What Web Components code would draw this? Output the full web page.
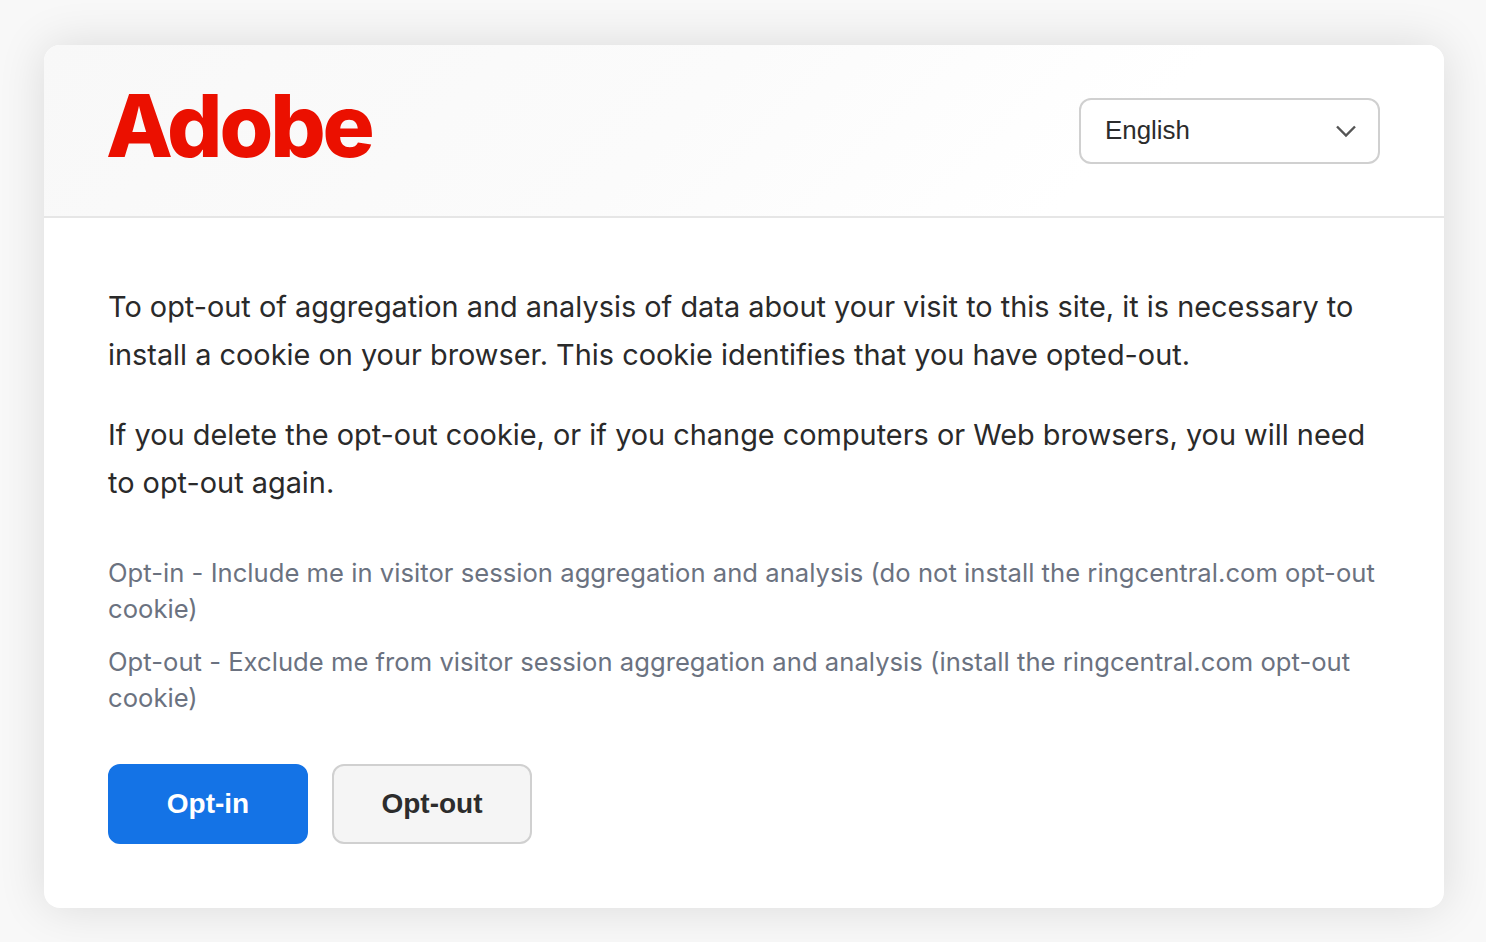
<!doctype html>
<html><head><meta charset="utf-8"><title>Opt-out</title>
<style>
html,body{margin:0;height:100%}
body{background:#f8f8f8;font-family:Inter,"Liberation Sans",sans-serif}
</style></head><body>
<optout-card>
  <adobe-logo slot="logo"></adobe-logo>
  <lang-select slot="lang">English</lang-select>
  <opt-para>To opt-out of aggregation and analysis of data about your visit to this site, it is necessary to install a cookie on your browser. This cookie identifies that you have opted-out.</opt-para>
  <opt-para>If you delete the opt-out cookie, or if you change computers or Web browsers, you will need to opt-out again.</opt-para>
  <opt-note slot="notes">Opt-in - Include me in visitor session aggregation and analysis (do not install the ringcentral.com opt-out cookie)</opt-note>
  <opt-note slot="notes">Opt-out - Exclude me from visitor session aggregation and analysis (install the ringcentral.com opt-out cookie)</opt-note>
  <opt-button slot="actions" variant="primary">Opt-in</opt-button>
  <opt-button slot="actions">Opt-out</opt-button>
</optout-card>
<script>
function def(name, html){
  customElements.define(name, class extends HTMLElement{
    constructor(){super();this.attachShadow({mode:'open'}).innerHTML=html;}
  });
}
def('optout-card',`<style>
:host{display:block;box-sizing:border-box;width:100%;height:100%;padding:45px 42px 34px 44px}
.card{background:#fff;border-radius:16px;height:863px;box-shadow:0 0 48px rgba(0,0,0,.12);overflow:hidden;display:flex;flex-direction:column}
header{height:171px;border-bottom:2px solid #e6e6e6;box-sizing:content-box;display:flex;justify-content:space-between;align-items:center;padding:0 64px;background:linear-gradient(135deg,#f8f8f8 0%,#fbfbfb 45%,#fff 75%)}
main{padding:65px 64px 0;display:flex;flex-direction:column}
.notes{display:flex;flex-direction:column;gap:17px;margin-top:16px}
.actions{display:flex;gap:24px;margin-top:48px}
</style><div class="card"><header><slot name="logo"></slot><slot name="lang"></slot></header>
<main><slot></slot><div class="notes"><slot name="notes"></slot></div><div class="actions"><slot name="actions"></slot></div></main></div>`);
def('adobe-logo',`<style>
:host{display:block;color:#eb1000;font:800 87px/1 Inter,"Liberation Sans",sans-serif;letter-spacing:-3.1px;margin-top:-10px;margin-left:-2px}
</style><span>Adobe</span>`);
def('lang-select',`<style>
:host{display:flex;box-sizing:border-box;width:301px;height:66px;align-items:center;justify-content:space-between;border:2px solid #d0d0d0;border-radius:12px;background:#fff;padding:0 21px 0 24px;font:25.9px "Liberation Sans",Arial,sans-serif;color:#2c2c2c}
svg{width:22px;height:14px}
</style><span><slot></slot></span><svg viewBox="0 0 22 14" fill="none" stroke="#555" stroke-width="2.4"><path d="M2 2.5l9 9 9-9"/></svg>`);
def('opt-para',`<style>
:host{display:block;font-size:28.88px;line-height:48px;color:#2a2a2a;margin-bottom:32px}
</style><slot></slot>`);
def('opt-note',`<style>
:host{display:block;font-size:25.6px;line-height:36px;color:#6b7280;letter-spacing:.03px}
</style><slot></slot>`);
def('opt-button',`<style>
:host{display:flex;box-sizing:border-box;width:200px;height:80px;align-items:center;justify-content:center;border-radius:12px;font:700 28px "Liberation Sans",Arial,sans-serif;border:2px solid #d0d0d0;background:#f5f5f5;color:#2c2c2c}
:host([variant=primary]){background:#1473e6;border-color:#1473e6;color:#fff}
</style><slot></slot>`);
</script></body></html>
